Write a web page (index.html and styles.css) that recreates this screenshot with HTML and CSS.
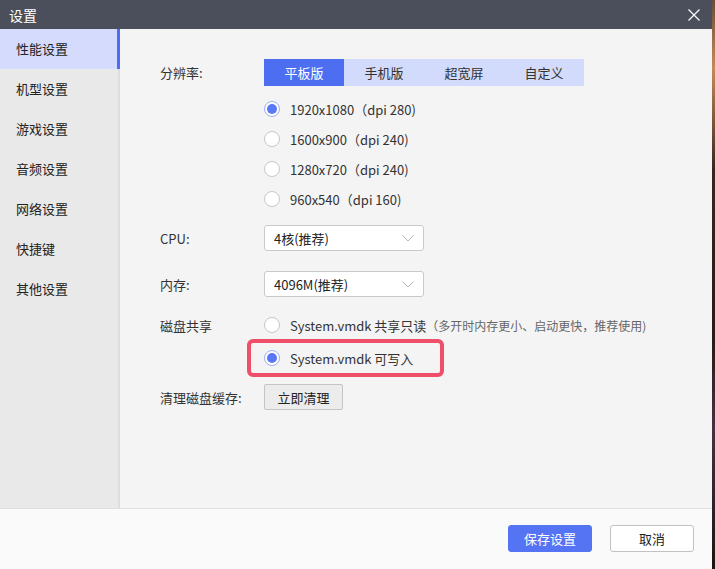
FILE: index.html
```html
<!DOCTYPE html>
<html lang="zh-CN">
<head>
<meta charset="utf-8">
<title>设置</title>
<link rel="stylesheet" href="styles.css">
</head>
<body>
<div class="dialog">
  <div class="titlebar">
    <span class="title">设置</span>
    <svg class="close" width="12" height="12" viewBox="0 0 12 12"><path d="M0.5 0.5L11.5 11.5M11.5 0.5L0.5 11.5" stroke="#fff" stroke-width="1.2" fill="none"/></svg>
  </div>
  <div class="main">
    <ul class="sidebar">
      <li class="nav active">性能设置</li>
      <li class="nav">机型设置</li>
      <li class="nav">游戏设置</li>
      <li class="nav">音频设置</li>
      <li class="nav">网络设置</li>
      <li class="nav">快捷键</li>
      <li class="nav">其他设置</li>
    </ul>
    <div class="content">
      <div class="row row-tabs">
        <span class="label">分辨率:</span>
        <div class="tabs">
          <span class="tab on">平板版</span>
          <span class="tab">手机版</span>
          <span class="tab">超宽屏</span>
          <span class="tab">自定义</span>
        </div>
      </div>
      <div class="radios">
        <div class="radio-row"><span class="radio checked"></span><span>1920x1080（dpi 280)</span></div>
        <div class="radio-row"><span class="radio"></span><span>1600x900（dpi 240)</span></div>
        <div class="radio-row"><span class="radio"></span><span>1280x720（dpi 240)</span></div>
        <div class="radio-row"><span class="radio"></span><span>960x540（dpi 160)</span></div>
      </div>
      <div class="row row-cpu">
        <span class="label">CPU:</span>
        <div class="select"><span>4核(推荐)</span><svg width="12" height="7" viewBox="0 0 12 7"><path d="M0.5 0.5L6 6L11.5 0.5" stroke="#b5b5b5" stroke-width="1" fill="none"/></svg></div>
      </div>
      <div class="row row-mem">
        <span class="label">内存:</span>
        <div class="select"><span>4096M(推荐)</span><svg width="12" height="7" viewBox="0 0 12 7"><path d="M0.5 0.5L6 6L11.5 0.5" stroke="#b5b5b5" stroke-width="1" fill="none"/></svg></div>
      </div>
      <div class="row row-disk">
        <span class="label">磁盘共享</span>
        <div class="radio-row"><span class="radio"></span><span>System.vmdk 共享只读</span><span class="hint">（多开时内存更小、启动更快，推荐使用)</span></div>
      </div>
      <div class="row row-write">
        <span class="label"></span>
        <div class="mark">
          <div class="radio-row"><span class="radio checked"></span><span>System.vmdk 可写入</span></div>
        </div>
      </div>
      <div class="row row-clean">
        <span class="label">清理磁盘缓存:</span>
        <button class="btn-clean">立即清理</button>
      </div>
    </div>
  </div>
  <div class="footer">
    <button class="btn btn-primary">保存设置</button>
    <button class="btn btn-default">取消</button>
  </div>
</div>
</body>
</html>
```

FILE: styles.css
```css
* { box-sizing: border-box; }
html, body { margin: 0; padding: 0; }
body {
  width: 715px;
  height: 569px;
  overflow: hidden;
  background: linear-gradient(180deg, #6b4a3a 0%, #c68a5a 12%, #3a2420 30%, #2a1a18 60%, #4a3040 75%, #1e1412 100%);
  font-family: "Noto Sans CJK SC", "Noto Sans", sans-serif;
  font-size: 13px;
  color: #333;
}
.dialog {
  width: 712px;
  height: 569px;
  display: flex;
  flex-direction: column;
  background: #f4f4f4;
}
.titlebar {
  height: 29px;
  background: #4b4f5b;
  display: flex;
  align-items: center;
  justify-content: space-between;
  padding: 0 12px 0 9px;
}
.title { color: #fff; font-size: 14px; }
.close { display: block; }
.main {
  flex: 1;
  display: flex;
  min-height: 0;
}
.sidebar {
  list-style: none;
  margin: 0;
  padding: 0;
  width: 120px;
  background: #e9e9e9;
  border-right: 2px solid #dedede;
}
.nav {
  height: 40px;
  line-height: 40px;
  padding-left: 16px;
  color: #222;
  position: relative;
}
.nav.active { background: #d4dbfc; }
.nav.active::after {
  content: "";
  position: absolute;
  right: -2px;
  top: 0;
  width: 3px;
  height: 40px;
  background: #4e6ef2;
}
.content {
  flex: 1;
  padding: 30px 0 0 40px;
}
.row {
  display: flex;
  align-items: center;
}
.label {
  width: 104px;
  flex: none;
  color: #333;
}
.tabs {
  display: flex;
  background: #d3dbfc;
}
.tab {
  width: 80px;
  height: 27px;
  line-height: 27px;
  text-align: center;
  color: #333;
}
.tab.on { background: #4e6ef2; color: #fff; }
.radios {
  margin: 8px 0 0 104px;
}
.radio-row {
  display: flex;
  align-items: center;
  height: 30px;
  white-space: nowrap;
}
.radio {
  width: 16px;
  height: 16px;
  border-radius: 50%;
  border: 1px solid #c7c7c7;
  background: #fff;
  margin-right: 10px;
  flex: none;
  display: flex;
  align-items: center;
  justify-content: center;
}
.radio.checked { border-color: #9eaef2; }
.radio.checked::after {
  content: "";
  width: 10px;
  height: 10px;
  border-radius: 50%;
  background: #5a78f5;
}
.hint { color: #666; font-size: 12px; }
.row-cpu { margin-top: 11px; }
.row-mem { margin-top: 20px; }
.select {
  width: 160px;
  height: 26px;
  background: #fff;
  border: 1px solid #cacaca;
  border-radius: 3px;
  display: flex;
  align-items: center;
  justify-content: space-between;
  padding: 0 9px 0 9px;
  color: #222;
}
.row-disk { margin-top: 13px; }
.row-write { margin-top: -1px; }
.mark {
  margin-left: -17px;
  width: 197px;
  height: 38px;
  border: 4px solid #ef4f68;
  border-radius: 6px;
  padding-left: 13px;
  display: flex;
  align-items: center;
}
.row-clean { margin-top: 7px; }
.btn-clean {
  width: 79px;
  height: 26px;
  border: 1px solid #c4c4c4;
  border-radius: 2px;
  background: #ececec;
  font-family: inherit;
  font-size: 13px;
  color: #222;
  padding: 0;
}
.footer {
  height: 61px;
  flex: none;
  background: #fafafa;
  border-top: 1px solid #dedede;
  display: flex;
  align-items: flex-start;
  justify-content: flex-end;
  padding: 16px 18px 0 0;
  gap: 18px;
}
.btn {
  width: 84px;
  height: 27px;
  border-radius: 3px;
  font-family: inherit;
  font-size: 13px;
  padding: 0;
}
.btn-primary {
  background: #5574f4;
  border: 1px solid #5574f4;
  color: #fff;
}
.btn-default {
  background: #fff;
  border: 1px solid #c2c2c2;
  color: #222;
}
```
